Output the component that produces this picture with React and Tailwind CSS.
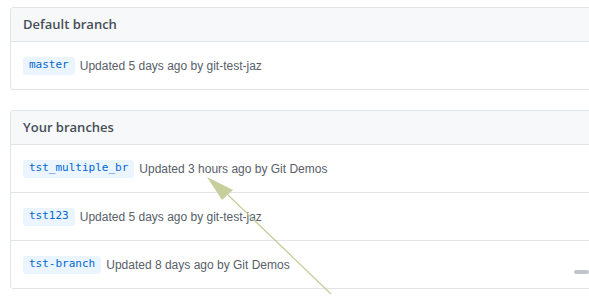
const Badge = ({ name }) => (
  <span className="inline-flex items-center h-[18px] px-[6px] rounded-[3px] bg-[#eaf5ff] text-[#0366d6] text-[11px] font-['DejaVu_Sans_Mono',monospace]">
    {name}
  </span>
)

const Row = ({ name, when, who, last }) => (
  <div className={"flex items-center px-3 gap-[5px] " + (last ? "h-[47px]" : "h-[48px] border-b border-[#e1e4e8]")}>
    <Badge name={name} />
    <span className="text-[12px] text-[#586069]">Updated {when} ago by {who}</span>
  </div>
)

const Box = ({ title, children, className }) => (
  <div className={"w-[640px] border border-[#e1e4e8] rounded-[3px] " + className}>
    <div className="h-[34px] flex items-center px-3 bg-[#f6f8fa] border-b border-[#e1e4e8] rounded-t-[3px]">
      <h3 className="text-[13px] font-semibold text-[#464e57] font-['Open_Sans',sans-serif]">{title}</h3>
    </div>
    {children}
  </div>
)

export default function App() {
  return (
    <div className="relative w-[589px] h-[306px] overflow-hidden bg-white font-['Liberation_Sans',Arial,sans-serif]">
      <div className="pt-[7px] pl-[10px]">
        <Box title="Default branch">
          <Row name="master" when="5 days" who="git-test-jaz" last />
        </Box>
        <Box title="Your branches" className="mt-[20px]">
          <Row name="tst_multiple_br" when="3 hours" who="Git Demos" />
          <Row name="tst123" when="5 days" who="git-test-jaz" />
          <Row name="tst-branch" when="8 days" who="Git Demos" last />
        </Box>
      </div>

      {/* scrollbar thumb fragment */}
      <div className="absolute left-[574px] top-[270px] w-[15px] h-[4px] rounded-full bg-[#c1c4c9]" />

      {/* annotation arrow */}
      <svg className="absolute left-0 top-0 pointer-events-none" width="589" height="306">
        <line x1="228" y1="195" x2="331" y2="294" stroke="#c5cf9c" strokeWidth="1.3" />
        <polygon points="207,177 233,190 222,200" fill="#c5cf9c" />
      </svg>
    </div>
  )
}
